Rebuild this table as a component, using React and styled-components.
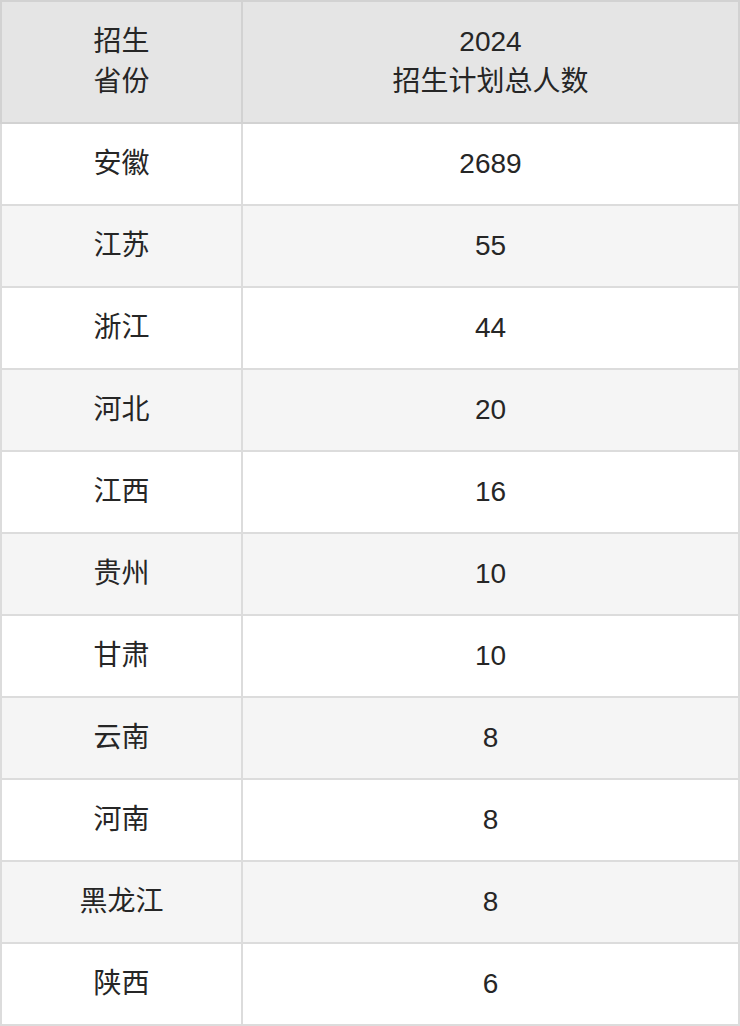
import React from "react";
import styled, { createGlobalStyle } from "styled-components";

const Global = createGlobalStyle`
  html, body { margin: 0; padding: 0; background: #fff; }
  body { font-family: "Liberation Sans", "Noto Sans CJK SC", sans-serif; }
`;

const Table = styled.table`
  width: 740px;
  border-collapse: collapse;
  table-layout: fixed;
  font-family: "Liberation Sans", "Noto Sans CJK SC", sans-serif;
  font-size: 28px;
  line-height: 40px;
  color: #262626;
`;

const HeadCell = styled.th`
  background: #e5e5e5;
  border: 2px solid #d2d2d2;
  font-weight: normal;
  text-align: center;
  padding: 20px 0;
  height: 80px;
  width: ${(p) => p.$w || "auto"};
`;

const Row = styled.tr`
  background: ${(p) => (p.$alt ? "#f5f5f5" : "#ffffff")};
`;

const Cell = styled.td`
  border: 2px solid #dcdcdc;
  text-align: center;
  padding: 20px 0;
  height: 40px;
`;

const data = [
  ["安徽", "2689"],
  ["江苏", "55"],
  ["浙江", "44"],
  ["河北", "20"],
  ["江西", "16"],
  ["贵州", "10"],
  ["甘肃", "10"],
  ["云南", "8"],
  ["河南", "8"],
  ["黑龙江", "8"],
  ["陕西", "6"],
];

export default function App() {
  return (
    <>
      <Global />
      <Table>
        <thead>
          <tr>
            <HeadCell $w="239px">
              招生
              <br />
              省份
            </HeadCell>
            <HeadCell>
              2024
              <br />
              招生计划总人数
            </HeadCell>
          </tr>
        </thead>
        <tbody>
          {data.map(([p, n], i) => (
            <Row key={p} $alt={i % 2 === 1}>
              <Cell>{p}</Cell>
              <Cell>{n}</Cell>
            </Row>
          ))}
        </tbody>
      </Table>
    </>
  );
}
